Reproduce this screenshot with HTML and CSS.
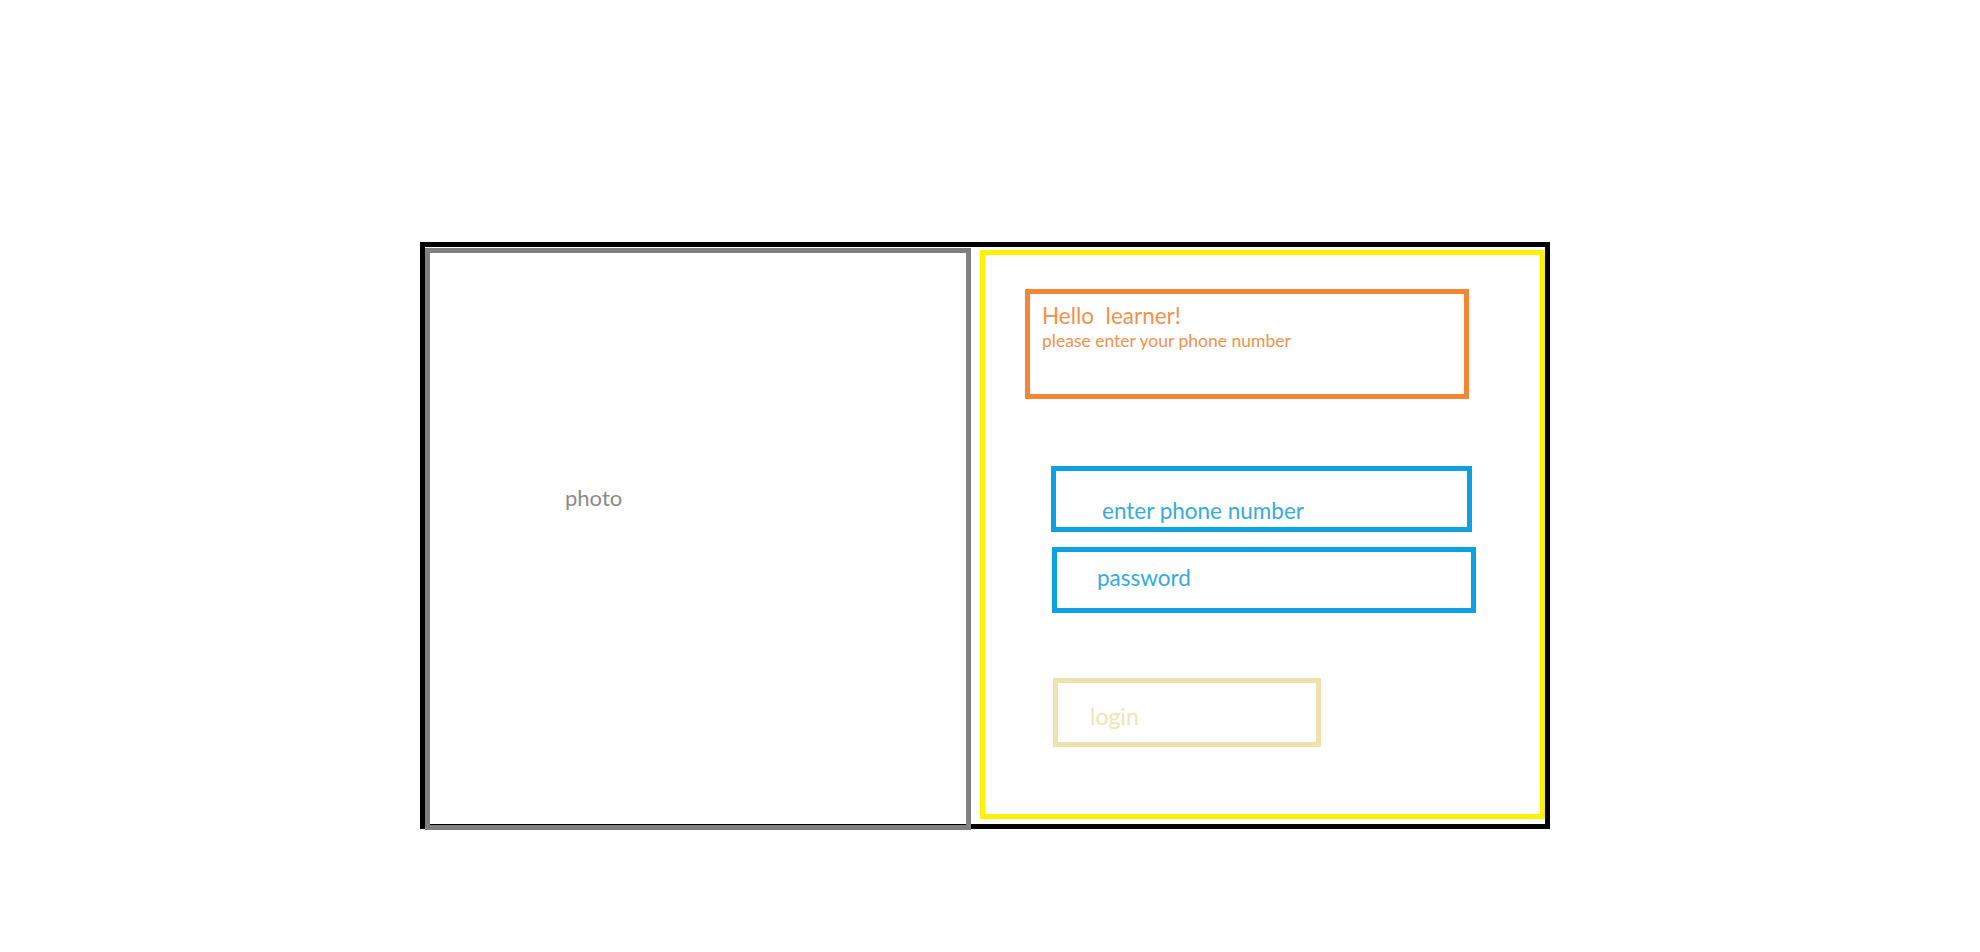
FILE: index.html
```html
<html>
  <head>
    <link rel="stylesheet" href="styles.css">
  </head>
  <body>
    <div class="login-frame">
        <!-- 左側の写真エリア -->
        <div class="photo-area">
            <p class="photo-label">photo</p>
        </div>
        <!-- 右側のフォームエリア -->
        <div class="form-area">
            <div class="greeting">
                <p class="greeting-title">Hello&nbsp; learner!</p>
                <p class="greeting-sub">please enter your phone number</p>
            </div>
            <div class="field field-phone">enter phone number</div>
            <div class="field field-password">password</div>
            <div class="login-btn">login</div>
        </div>
    </div>
  </body>
</html>
```

FILE: styles.css
```css
* {
  margin: 0;
  padding: 0;
  box-sizing: border-box;
}
body {
    background-color: #fff;
    font-family: Lato, "Open Sans", sans-serif;
}
.login-frame {
    display: flex;
    align-items: flex-start;
    width: 1130px;
    height: 587px;
    margin: 242px 0 0 420px;
    border: 5px solid #000;
}
/* 写真 */
.photo-area {
    width: 546px;
    height: 582px;
    margin-top: 1px;
    border: 5px solid #808080;
    padding: 233px 0 0 135px;
}
.photo-label {
    font-size: 22px;
    line-height: 24px;
    color: #8a8a8a;
}
/* フォーム */
.form-area {
    width: 565px;
    height: 569px;
    margin: 3px 0 0 9px;
    border: 5px solid #fff200;
}
.greeting {
    width: 444px;
    height: 110px;
    margin: 34px 0 0 40px;
    border: 5px solid #f58634;
    padding: 9px 0 0 12px;
    color: #f5904a;
}
.greeting-title {
    font-size: 22.5px;
    line-height: 26px;
}
.greeting-sub {
    font-size: 17.5px;
    line-height: 20px;
    margin-top: 2px;
}
.field {
    height: 66px;
    border: 5px solid #0ea1e1;
    color: #35abe0;
    font-size: 22.5px;
    line-height: 24px;
}
.field-phone {
    width: 421px;
    margin: 67px 0 0 66px;
    padding: 28px 0 0 46px;
}
.field-password {
    width: 424px;
    margin: 15px 0 0 67px;
    padding: 14px 0 0 40px;
}
.login-btn {
    width: 268px;
    height: 69px;
    margin: 65px 0 0 68px;
    border: 5px solid #eee2ae;
    padding: 21px 0 0 32px;
    color: #efe4b6;
    font-size: 23px;
    line-height: 24px;
}
```
